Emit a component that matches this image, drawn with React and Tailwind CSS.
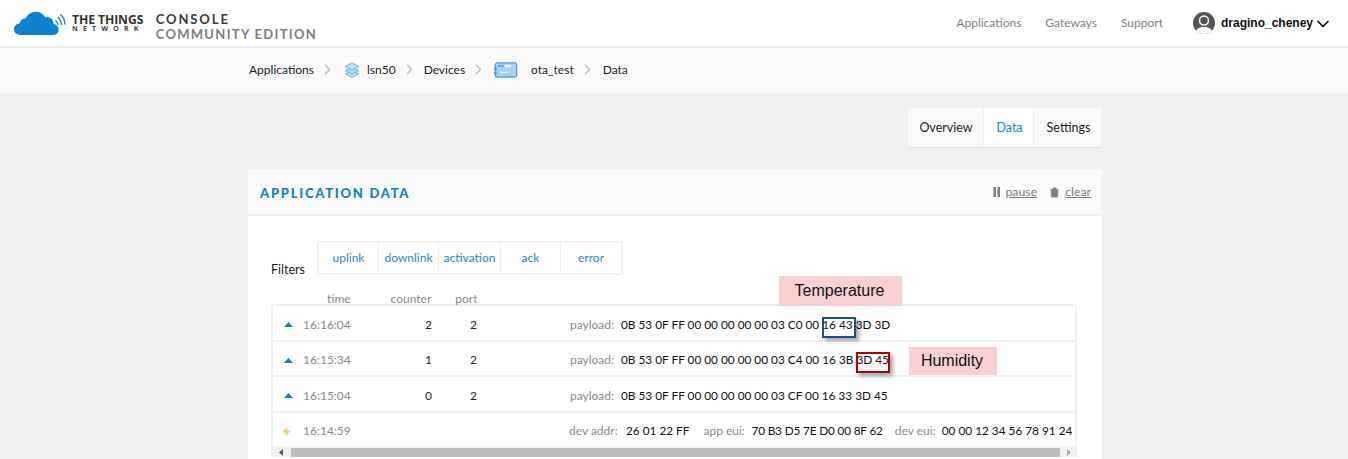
import { ChevronRight, ChevronDown, Trash2, Zap } from 'lucide-react';

const FILTERS = [
  { label: 'uplink', width: 'w-[60px]' },
  { label: 'downlink', width: 'w-[60px]' },
  { label: 'activation', width: 'w-[62px]' },
  { label: 'ack', width: 'w-[60px]' },
  { label: 'error', width: 'w-[60px]' },
];

const ROWS = [
  { time: '16:16:04', counter: '2', port: '2', payload: '0B 53 0F FF 00 00 00 00 00 03 C0 00 16 43 3D 3D' },
  { time: '16:15:34', counter: '1', port: '2', payload: '0B 53 0F FF 00 00 00 00 00 03 C4 00 16 3B 3D 45' },
  { time: '16:15:04', counter: '0', port: '2', payload: '0B 53 0F FF 00 00 00 00 00 03 CF 00 16 33 3D 45' },
];

function Logo() {
  return (
    <div className="flex items-center">
      <svg width="52" height="27" viewBox="0 1 50 25" className="ml-[14px]">
        <path
          d="M6 24.500C2.500 24.500 0 22 0 19c0-3 2.200-5.300 5.200-5.600C6 10.500 8.500 8.500 11 8.800 13 5 16.500 2.200 21 2.200c4 0 7.500 2.300 9 5.600 1-.5 2.500-.7 3.500-.3 3 1 4.500 3.500 4.500 6.500 3 .5 5 3 5 5.500 0 3-2.500 5-5.500 5z"
          fill="#0d83d0"
        />
        <path d="M40 9.500c1.500 1.500 2.200 3 2.200 4.800M42 6.500c2.400 2 3.600 4.600 3.600 7.500M44.500 3.500c3 2.600 4.500 6.200 4.500 10" fill="none" stroke="#0d83d0" strokeWidth="1.300" transform="translate(0 1)" />
      </svg>
      <div className="ml-[6px] mt-[2px] flex flex-col items-start leading-none font-['Open_Sans',sans-serif] font-bold">
        <span className="text-[12.200px] text-[#333] tracking-[-0.1px] leading-[10px]">THE THINGS</span>
        <span className="text-[7px] text-[#444] tracking-[5.200px] leading-[8px]">NETWORK</span>
      </div>
      <div className="ml-[12px] mt-[6px] flex flex-col font-['Lato',sans-serif] font-bold leading-none">
        <span className="text-[13px] text-[#3a3a3a] tracking-[1.900px] leading-[14px]">CONSOLE</span>
        <span className="text-[13px] text-[#7b7f83] tracking-[1.300px] leading-[14px] mt-[1px]">COMMUNITY EDITION</span>
      </div>
    </div>
  );
}

function StackIcon() {
  return (
    <svg width="16" height="16" viewBox="0 0 16 16" fill="#bcdcf5" stroke="#6db0e6" strokeWidth="0.900" className="ml-[8px] mr-[7px]">
      <path d="M8 9 15 12 8 15.500 1 12z" />
      <path d="M8 5.500 15 8.500 8 12 1 8.500z" />
      <path d="M8 .8 15 4.500 8 8.200 1 4.500z" />
    </svg>
  );
}

function DeviceIcon() {
  return (
    <svg width="26" height="16" viewBox="0 0 27 18" className="ml-[6px] mr-[12px]">
      <rect x="1.500" y="1" width="24" height="16" rx="2" fill="#a9d1f5" stroke="#4d9de0" strokeWidth="1.400" />
      <rect x="5" y="3.500" width="2" height="2" fill="#2f86d6" />
      <rect x="8.500" y="3.500" width="2" height="2" fill="#2f86d6" />
      <rect x="12" y="3.500" width="7" height="2" fill="#eef6fd" />
      <rect x="0" y="6" width="3" height="3" fill="#4d9de0" />
      <rect x="0" y="11" width="3" height="3" fill="#4d9de0" />
      <rect x="7" y="11" width="9" height="1.500" fill="#e6f2fc" />
    </svg>
  );
}

function Crumb() {
  return <ChevronRight size={17} strokeWidth={2} className="text-[#bdbdbd] ml-[5px]" />;
}

function Payload({ text, className = '' }) {
  return <span className={`text-[11.800px] text-[#111] whitespace-nowrap shrink-0 ${className}`}>{text}</span>;
}

function Row({ row }) {
  return (
    <div className="flex items-center h-[35.500px] pt-[4px] border-b-2 border-[#f1f1f1]">
      <svg width="9" height="5" viewBox="0 0 9 5" className="ml-[11px]">
        <path d="M4.500 0 9 5H0z" fill="#0d83d0" />
      </svg>
      <span className="ml-[10px] w-[75px] text-[12px] text-[#8a8a8a]">{row.time}</span>
      <span className="w-[54px] text-right text-[12px] text-[#222]">{row.counter}</span>
      <span className="w-[45px] text-right text-[12px] text-[#222]">{row.port}</span>
      <span className="ml-[93px] w-[51px] text-[12px] text-[#8a8a8a]">payload:</span>
      <Payload text={row.payload} />
    </div>
  );
}

export default function App() {
  return (
    <div className="relative h-[459px] overflow-hidden bg-[#f1f1f1] font-['Lato',sans-serif]">
      {/* Header */}
      <header className="flex items-center justify-between h-[48px] bg-white border-b-2 border-[#eeeeee]">
        <Logo />
        <nav className="flex items-center text-[12px] text-[#7f7f7f]">
          <span>Applications</span>
          <span className="ml-[24px]">Gateways</span>
          <span className="ml-[24px]">Support</span>
          <svg width="22" height="22" viewBox="0 0 22 22" className="ml-[30px]">
            <clipPath id="avatar"><circle cx="11" cy="11" r="11" /></clipPath>
            <g clipPath="url(#avatar)">
              <rect width="22" height="22" fill="#555555" />
              <circle cx="11" cy="8.500" r="4.500" fill="#555" stroke="#fff" strokeWidth="1.500" />
              <path d="M2 22c1-6 5-7 9-7s8 1 9 7z" fill="#fff" />
            </g>
          </svg>
          <span className="ml-[6px] font-['Liberation_Sans',sans-serif] font-bold text-[12px] text-[#111]">dragino_cheney</span>
          <ChevronDown size={20} strokeWidth={2} className="mr-[15px] mt-[2px] text-[#111]" />
        </nav>
      </header>

      {/* Breadcrumb */}
      <div className="flex items-center h-[46px] pl-[249px] pb-[2px] bg-[#fafafa] border-b border-[#efefef] text-[12px] text-[#1a1a2a]">
        <span>Applications</span>
        <Crumb />
        <StackIcon />
        <span>lsn50</span>
        <Crumb />
        <span className="ml-[6px]">Devices</span>
        <Crumb />
        <DeviceIcon />
        <span>ota_test</span>
        <Crumb />
        <span className="ml-[7px]">Data</span>
      </div>

      <main className="w-[854px] ml-[248px]">
        {/* Tabs */}
        <div className="flex justify-end mt-[14px]">
          <div className="flex h-[39px] items-center rounded-[3px] bg-[#fafafa] shadow-[0_1px_1px_rgba(0,0,0,0.08)] text-[12.500px] overflow-hidden">
            <span className="flex items-center justify-center w-[76px] h-full pt-[2px] pl-[1px] text-[#1a1a2a] border-r border-[#eeeeee]">Overview</span>
            <span className="flex items-center justify-center w-[50px] h-full pt-[2px] pl-[2px] bg-white text-[#0d83d0] border-r border-[#eeeeee]">Data</span>
            <span className="flex items-center justify-center w-[68px] h-full pt-[2px] pl-[1px] text-[#1a1a2a]">Settings</span>
          </div>
        </div>

        {/* Card */}
        <section className="mt-[22px] rounded-[3px] bg-white h-[300px]">
          <div className="flex items-center justify-between h-[47px] pt-[2px] px-[12px] rounded-t-[3px] bg-[#fafafa] border-b-2 border-[#efefef]">
            <h2 className="text-[13px] font-black tracking-[1.750px] text-[#0d83d0] mt-[2px]">APPLICATION DATA</h2>
            <div className="flex items-center text-[12.300px] text-[#7f7f7f] mr-[-1px] mt-[-1px]">
              <svg width="8" height="10" viewBox="0 0 8 10">
                <rect x="0.500" width="2.500" height="10" fill="#7f7f7f" />
                <rect x="4.500" width="2.500" height="10" fill="#7f7f7f" />
              </svg>
              <span className="ml-[4px] underline">pause</span>
              <Trash2 size={11} fill="#7f7f7f" strokeWidth={1.500} className="ml-[12px]" />
              <span className="ml-[5px] underline">clear</span>
            </div>
          </div>

          <div className="px-[24px]">
            {/* Filters */}
            <div className="flex items-end h-[47px] mt-[12px]">
              <span className="text-[12.500px] text-[#1a1a2a] w-[46px] ml-[-1px] mb-[-5px]">Filters</span>
              <div className="flex h-[34px] rounded-[3px] border-2 border-[#f0f0f0] text-[12px] text-[#2a86cf]">
                {FILTERS.map((filter, i) => (
                  <span
                    key={filter.label}
                    className={`flex items-center justify-center ${filter.width} ${i < FILTERS.length - 1 ? 'border-r border-[#f0f0f0]' : ''}`}
                  >
                    {filter.label}
                  </span>
                ))}
              </div>
            </div>

            {/* Column titles */}
            <div className="flex h-[14px] mt-[14px] text-[12px] text-[#8a8a8a] leading-[19px]">
              <span className="ml-[55px]">time</span>
              <span className="ml-[40px]">counter</span>
              <span className="ml-[24px]">port</span>
            </div>

            {/* Events */}
            <div className="w-[806px] ml-[-1px] mt-[1px] rounded-t-[3px] border-x-2 border-t-2 border-[#f0f0f0] overflow-hidden">
              {ROWS.map((row) => (
                <Row key={row.time} row={row} />
              ))}
              <div className="flex items-center h-[35.500px] pt-[4px] border-b-2 border-[#f1f1f1] whitespace-nowrap text-[12px]">
                <Zap size={9} fill="#f7cb6a" stroke="#f7cb6a" className="ml-[9px] shrink-0" />
                <span className="ml-[12px] w-[72px] text-[#8a8a8a] shrink-0">16:14:59</span>
                <span className="ml-[194px] w-[57px] text-[#8a8a8a] shrink-0">dev addr:</span>
                <Payload text="26 01 22 FF" />
                <span className="ml-[14px] w-[48px] text-[#8a8a8a] shrink-0">app eui:</span>
                <Payload text="70 B3 D5 7E D0 00 8F 62" className="tracking-[-0.170px]" />
                <span className="ml-[12px] w-[47px] text-[#8a8a8a] shrink-0">dev eui:</span>
                <Payload text="00 00 12 34 56 78 91 24" />
              </div>
              {/* Scrollbar */}
              <div className="flex items-center h-[9px] bg-[#f1f1f1]">
                <svg width="5" height="7" viewBox="0 0 5 7" className="ml-[6px]">
                  <path d="M4 0v7L0 3.500z" fill="#555" />
                </svg>
                <div className="ml-[7px] w-[769px] h-full bg-[#bdbdbd]" />
                <svg width="5" height="7" viewBox="0 0 5 7" className="ml-[7px]">
                  <path d="M0 0v7l4-3.500z" fill="#a8a8a8" />
                </svg>
              </div>
            </div>
          </div>
        </section>
      </main>

      {/* Annotations drawn over the screenshot */}
      <div className="absolute left-[779px] top-[276px] w-[123px] h-[30px] pr-[2px] flex items-center justify-center bg-[#f8d0d2] font-['Liberation_Sans',sans-serif] text-[16px] text-[#111]">
        Temperature
      </div>
      <div className="absolute left-[909px] top-[347px] w-[88px] h-[28px] pr-[2px] flex items-center justify-center bg-[#f8d0d2] font-['Liberation_Sans',sans-serif] text-[16px] text-[#111]">
        Humidity
      </div>
      <div className="absolute left-[822px] top-[317px] w-[34px] h-[21px] border-2 border-[#1f4e86] shadow-[3px_3px_4px_rgba(0,0,0,0.35)]" />
      <div className="absolute left-[856px] top-[352px] w-[34px] h-[21px] border-2 border-[#b00000] shadow-[3px_3px_4px_rgba(0,0,0,0.35)]" />
    </div>
  );
}
